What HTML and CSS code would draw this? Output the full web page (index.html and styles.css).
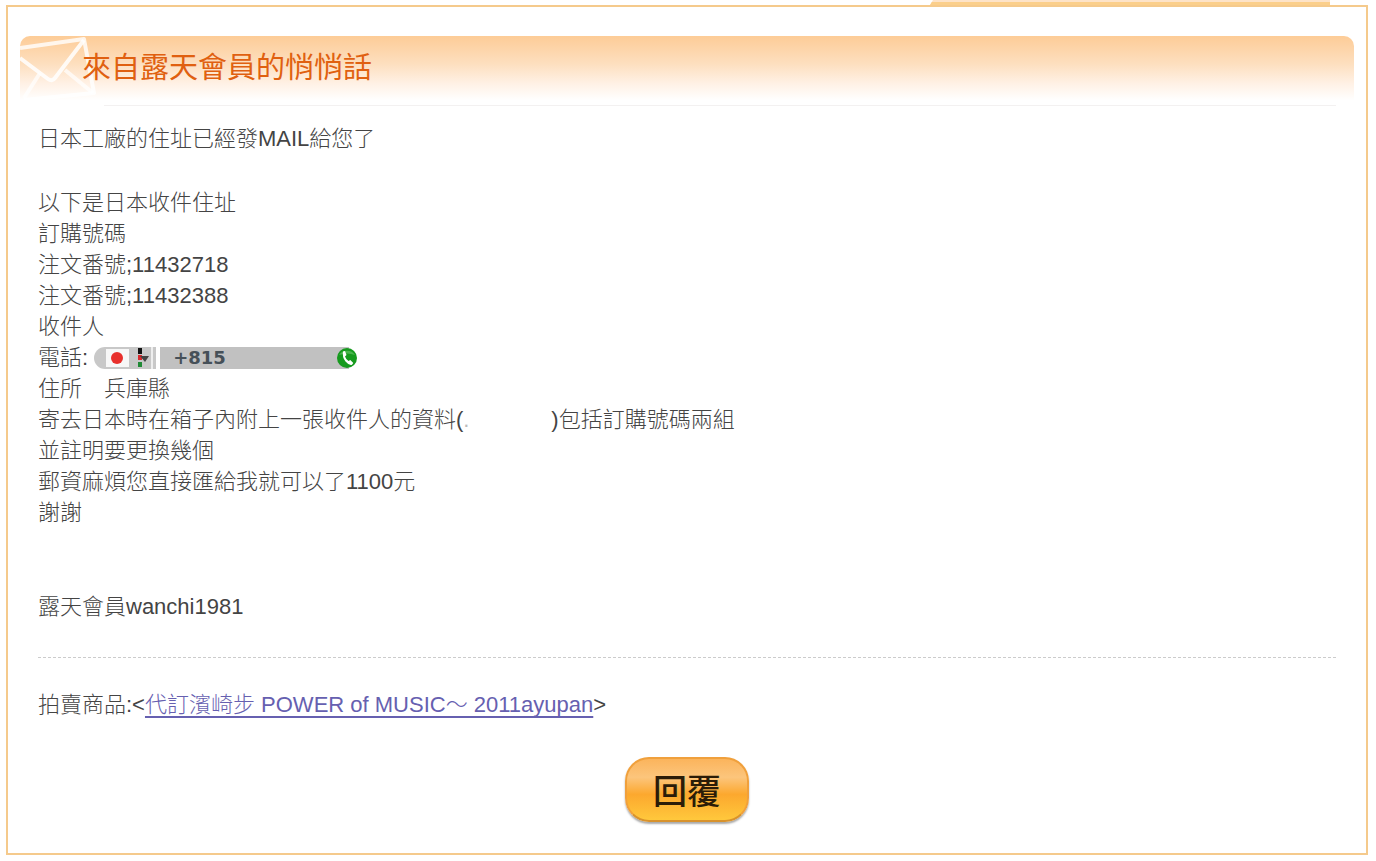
FILE: index.html
```
<!DOCTYPE html>
<html lang="zh-Hant">
<head>
    <meta charset="UTF-8">
    <meta name="viewport" content="width=device-width, initial-scale=1.0">
    <title>來自露天會員的悄悄話</title>
    <link rel="stylesheet" href="styles.css">
</head>
<body>

    <!-- Bottom edge of the tab above the box -->
    <div class="tab-edge"></div>

    <main class="message-box">
        <header class="message-header">
            <svg class="envelope" width="76" height="66" viewBox="0 0 76 66" aria-hidden="true">
                <g fill="none" stroke="#fff" stroke-linejoin="round">
                    <path d="M0 12 L64 3 L74 57 L4 64" stroke-width="4" opacity="0.8"/>
                    <path d="M0 22 L28 43 Q32 46 35 42 L64 4" stroke-width="4" opacity="0.85"/>
                    <path d="M20 37 L4 62 M45 34 L73 57" stroke-width="4" opacity="0.7"/>
                </g>
            </svg>
            <h1>來自露天會員的悄悄話</h1>
        </header>

        <div class="message-body">
            <p>日本工廠的住址已經發MAIL給您了</p>

            <div class="address">
                <p>以下是日本收件住址</p>
                <p>訂購號碼</p>
                <p>注文番號;11432718</p>
                <p>注文番號;11432388</p>
                <p>收件人</p>
                <div class="phone-line">
                    <span>電話:</span>
                    <button type="button" class="flag-button" aria-label="日本">
                        <svg width="54" height="22" viewBox="0 0 54 22" aria-hidden="true">
                            <rect x="4" y="2" width="23" height="18" fill="#f7f7f7"/>
                            <circle cx="15" cy="11" r="6" fill="#e8302c"/>
                            <rect x="36" y="1" width="4" height="6" fill="#111"/>
                            <rect x="36" y="8" width="4" height="5" fill="#d8282c"/>
                            <rect x="36" y="15" width="4" height="5" fill="#1f8a35"/>
                            <path d="M38 9h9l-4 6z" fill="#444"/>
                            <path d="M50 0v22" stroke="#eee" stroke-width="2"/>
                        </svg>
                    </button>
                    <span class="phone-number">+815</span>
                    <button type="button" class="call-button" aria-label="撥打電話">
                        <svg width="22" height="22" viewBox="0 0 22 22" aria-hidden="true">
                            <circle cx="11" cy="11" r="10" fill="#169a1e"/>
                            <path d="M3 8a9 8 0 0 1 16 0q-8-3-16 0z" fill="#6cc96a" opacity="0.6"/>
                            <path d="M7 4.500l2-.5 1.500 4-1.500 1.500q1 3 3.500 4.500l1.800-1 3 3-1.300 1.700q-3 1-6.500-3.200T7 4.500z" fill="#fff"/>
                        </svg>
                    </button>
                </div>
                <p>住所　兵庫縣</p>
                <p>寄去日本時在箱子內附上一張收件人的資料(<span class="erased">.</span>)包括訂購號碼兩組</p>
                <p>並註明要更換幾個</p>
                <p>郵資麻煩您直接匯給我就可以了1100元</p>
                <p>謝謝</p>
            </div>

            <p class="sender">露天會員wanchi1981</p>

            <p class="item">拍賣商品:&lt;<a href="#">代訂濱崎步 POWER of MUSIC～ 2011ayupan</a>&gt;</p>

            <button type="button" class="reply-button">回覆</button>
        </div>
    </main>

</body>
</html>
```

FILE: styles.css
```
* {
    box-sizing: border-box;
}
body {
    margin: 0 8px 5px 6px;
    background-color: #fff;
    color: #444;
    font-family: "Liberation Sans", "Noto Sans CJK TC", sans-serif;
    font-size: 22px;
    font-weight: 300;
    line-height: 31px;
}
h1, p {
    margin: 0;
}
.tab-edge {
    width: 400px;
    height: 5px;
    margin: 0 38px 0 auto;
    border-bottom: 3px solid #fbcf8b;
    background-color: #fde3c8;
    clip-path: polygon(3px 0, 100% 0, 100% 100%, 0 100%);
}
.message-box {
    padding: 29px 12px 31px;
    border: 2px solid #f5ca8c;
}
.message-header {
    display: flex;
    height: 70px;
    border-radius: 10px 10px 0 0;
    background: linear-gradient(#fdcc97, #fddfbf 40%, #fff1e5 68%, #fff 92%);
    position: relative;
}
/* faint rule under the title */
.message-header::after {
    content: "";
    position: absolute;
    left: 84px;
    right: 18px;
    bottom: 0;
    height: 1px;
    background-color: #f3f1f1;
}
.envelope {
    position: absolute;
    left: 0;
    top: 0;
}
.message-header h1 {
    padding: 12px 0 0 62px;
    color: #e06010;
    font-size: 29px;
    font-weight: 400;
    line-height: 40px;
    position: relative;
}
.message-body {
    padding: 17px 18px 0;
}
.address {
    margin-top: 33px;
}
.phone-line {
    display: flex;
    align-items: center;
    height: 31px;
}
.flag-button, .call-button {
    display: block;
    height: 22px;
    padding: 0;
    border: none;
    background-color: #c8c8c8;
    cursor: pointer;
}
.flag-button {
    width: 62px;
    margin: 0 4px 0 6px;
    padding-left: 8px;
    border-radius: 11px 0 0 11px;
}
.flag-button svg, .call-button svg {
    display: block;
}
.phone-number {
    width: 176px;
    height: 22px;
    padding-left: 13px;
    background-color: #c1c1c1;
    color: #465058;
    font-family: "DejaVu Sans", sans-serif;
    font-size: 18px;
    font-weight: 700;
    line-height: 22px;
}
.call-button {
    width: 25px;
    background: linear-gradient(to right, #c1c1c1 50%, #fff 50%);
}
.erased {
    display: inline-block;
    width: 88px;
    color: #bbb;
}
.sender {
    margin-top: 63px;
    padding-bottom: 35px;
    border-bottom: 1px dashed #ccc;
}
.item {
    margin-top: 31px;
}
.item a {
    color: #6660b0;
    text-decoration: underline 2px;
    text-underline-offset: 4px;
    text-decoration-skip-ink: none;
}
.reply-button {
    display: block;
    width: 124px;
    height: 65px;
    margin: 37px auto 0;
    padding: 0;
    border: 2px solid #f0a03c;
    border-bottom-color: #d8922c;
    border-radius: 24px;
    background: linear-gradient(#fbb45c, #fcc57c 30%, #fca82e 58%, #ffc83c);
    box-shadow: 0 2px 2px #aaa;
    color: #2b1c08;
    font-family: "Noto Sans CJK TC", sans-serif;
    font-size: 34px;
    font-weight: 500;
    line-height: 60px;
    cursor: pointer;
}
```
